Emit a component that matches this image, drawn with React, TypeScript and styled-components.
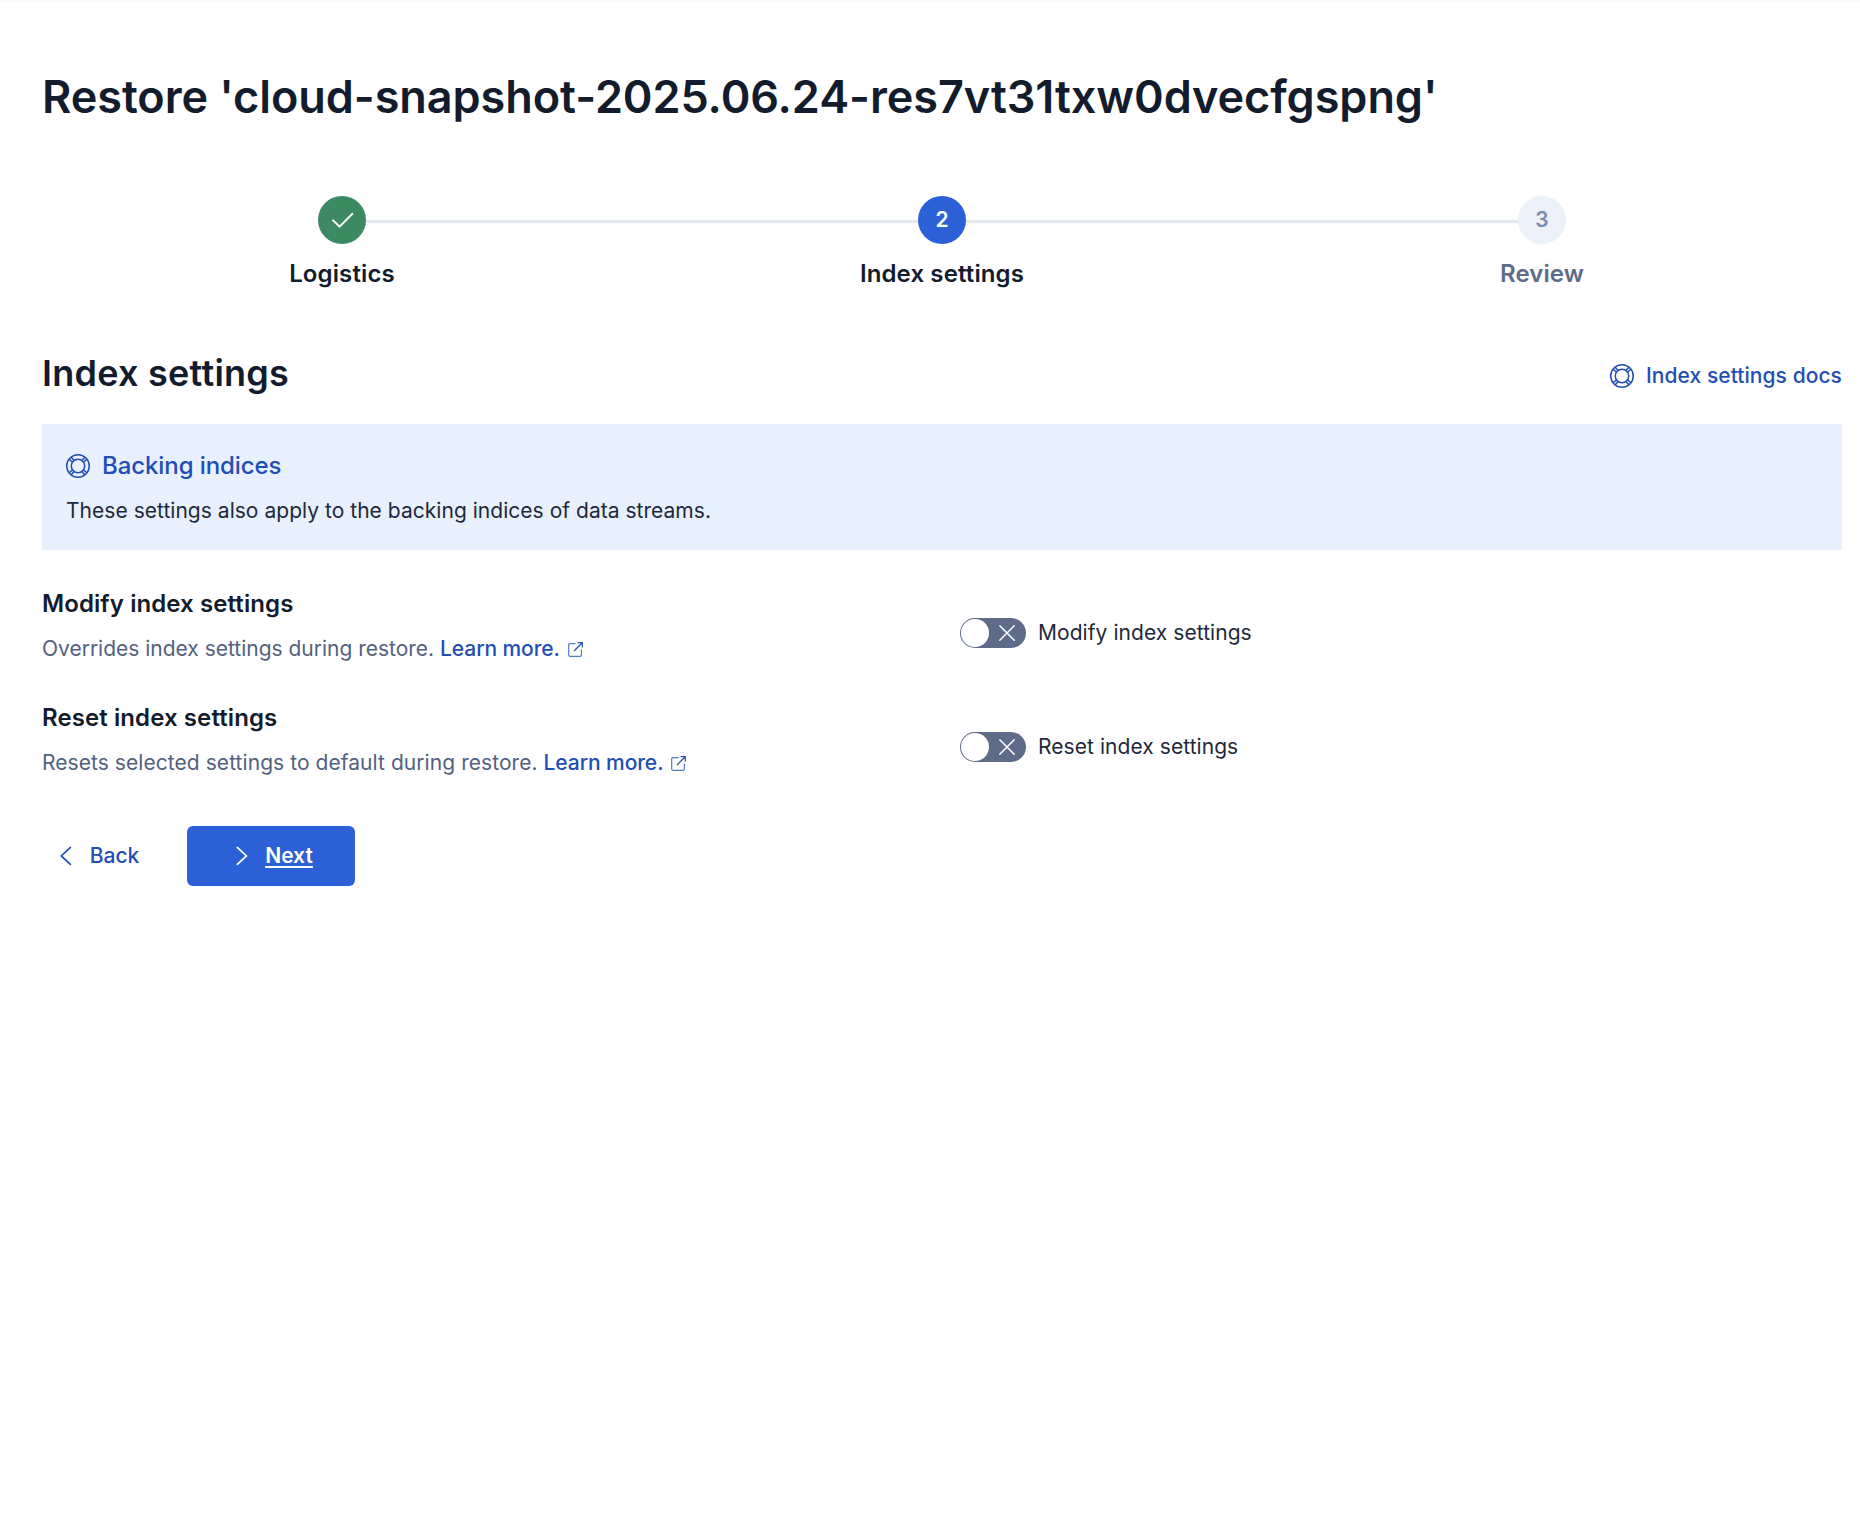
import React from 'react';
import styled, { createGlobalStyle } from 'styled-components';

const colors = {
  ink: '#131c2c',
  text: '#1e293c',
  subdued: '#536180',
  muted: '#5e6c89',
  link: '#214eb4',
  primary: '#2c60d6',
  success: '#3d8a62',
  line: '#e3e8f2',
  panel: '#e8f0fe',
};

const GlobalStyle = createGlobalStyle`
  * { box-sizing: border-box; }
  body {
    margin: 0;
    background: #fff;
    color: ${colors.ink};
    font-family: Inter, "Liberation Sans", sans-serif;
    font-size: 21px;
    line-height: 30px;
    -webkit-font-smoothing: antialiased;
  }
  h1, h2, h3, p { margin: 0; }
`;

const Page = styled.main`
  min-height: 1532px;
  padding: 67px 18px 0 42px;
  background: linear-gradient(#f8f8f9, #fff 4px);
`;

const PageTitle = styled.h1`
  font-size: 45px;
  line-height: 60px;
  font-weight: 600;
  letter-spacing: -0.06px;
  white-space: nowrap;
`;

const Steps = styled.ol`
  display: grid;
  grid-template-columns: repeat(3, 1fr);
  list-style: none;
  margin: 69px 0 0;
  padding: 0;
`;

const Step = styled.li<{ $disabled?: boolean }>`
  display: flex;
  flex-direction: column;
  align-items: center;
  color: ${(p) => (p.$disabled ? colors.muted : colors.ink)};
`;

const StepTrack = styled.div`
  display: flex;
  align-items: center;
  width: 100%;
`;

const Connector = styled.span<{ $hidden?: boolean }>`
  flex: 1;
  height: 3px;
  margin-top: 3px;
  background: ${(p) => (p.$hidden ? 'transparent' : colors.line)};
`;

const StepCircle = styled.span<{ $bg: string; $fg: string }>`
  display: flex;
  align-items: center;
  justify-content: center;
  width: 48px;
  height: 48px;
  border-radius: 50%;
  background: ${(p) => p.$bg};
  color: ${(p) => p.$fg};
  font-weight: 600;
`;

const StepLabel = styled.span`
  margin-top: 12px;
  font-size: 24px;
  line-height: 36px;
  font-weight: 600;
  letter-spacing: 0.12px;
`;

const SectionHeader = styled.header`
  display: flex;
  justify-content: space-between;
  align-items: center;
  margin-top: 57px;
  height: 48px;
`;

const SectionTitle = styled.h2`
  font-size: 36px;
  line-height: 48px;
  font-weight: 600;
  letter-spacing: 0.25px;
`;

const DocsLink = styled.a`
  display: flex;
  align-items: center;
  gap: 12px;
  margin-top: 6px;
  color: ${colors.link};
  font-weight: 500;
  letter-spacing: 0.06px;
`;

const Callout = styled.section`
  display: flex;
  flex-direction: column;
  gap: 12px;
  margin-top: 27px;
  padding: 24px;
  background: ${colors.panel};
  color: ${colors.text};
  letter-spacing: 0.03px;
`;

const CalloutTitle = styled.div`
  display: flex;
  align-items: center;
  gap: 12px;
  color: ${colors.link};
  font-size: 24px;
  line-height: 36px;
  font-weight: 500;
  letter-spacing: -0.08px;
`;

const Settings = styled.div`
  display: flex;
  flex-direction: column;
  gap: 36px;
  margin-top: 36px;
`;

const SettingRow = styled.div<{ $tracking: number }>`
  display: grid;
  grid-template-columns: 1fr 1fr;
  column-gap: 36px;
  letter-spacing: ${(p) => p.$tracking}px;
`;

const SettingTitle = styled.h3`
  font-size: 24px;
  line-height: 36px;
  font-weight: 600;
  letter-spacing: 0.09px;
`;

const SettingDescription = styled.p`
  margin-top: 12px;
  color: ${colors.subdued};
`;

const InlineLink = styled.a`
  color: ${colors.link};
  font-weight: 500;
  letter-spacing: -0.08px;

  svg {
    margin-left: 8px;
    vertical-align: -1px;
  }
`;

const SwitchField = styled.label`
  display: flex;
  align-items: center;
  align-self: start;
  gap: 12px;
  margin-top: 32px;
  color: ${colors.text};
  letter-spacing: 0.06px;
`;

const SwitchBody = styled.span`
  display: flex;
  align-items: center;
  justify-content: space-between;
  width: 66px;
  height: 30px;
  padding: 0 11px 0 1px;
  border-radius: 15px;
  background: ${colors.muted};
`;

const SwitchThumb = styled.span`
  width: 28px;
  height: 28px;
  border-radius: 50%;
  background: #fff;
`;

const Actions = styled.div`
  display: flex;
  align-items: center;
  gap: 36px;
  margin-top: 48px;
`;

const Button = styled.button<{ $primary?: boolean }>`
  display: flex;
  align-items: center;
  justify-content: center;
  gap: 12px;
  height: 60px;
  width: ${(p) => (p.$primary ? '168px' : '109px')};
  padding: 0;
  border: 0;
  border-radius: 6px;
  background: ${(p) => (p.$primary ? colors.primary : 'transparent')};
  color: ${(p) => (p.$primary ? '#fff' : colors.link)};
  font: inherit;
  font-weight: ${(p) => (p.$primary ? 600 : 500)};
  text-decoration: ${(p) => (p.$primary ? 'underline' : 'none')};
  text-decoration-thickness: 2px;
  text-underline-offset: 3px;
`;

const HelpIcon = () => (
  <svg width="24" height="24" viewBox="0 0 24 24" fill="none" stroke="currentColor" strokeWidth="1.5">
    <circle cx="12" cy="12" r="11.25" />
    <circle cx="12" cy="12" r="6.75" />
    <path d="M3.2 5.2l3.7 3.3M5.2 3.2l3.3 3.7M20.8 5.2l-3.7 3.3M18.8 3.2l-3.3 3.7M3.2 18.8l3.7-3.3M5.2 20.8l3.3-3.7M20.8 18.8l-3.7-3.3M18.8 20.8l-3.3-3.7" />
  </svg>
);

const CheckIcon = () => (
  <svg width="24" height="24" viewBox="0 0 24 24" fill="none" stroke="currentColor" strokeWidth="2" strokeLinecap="round" strokeLinejoin="miter">
    <path d="M3.1 12.4l6.5 6.3L22.3 5.9" />
  </svg>
);

const PopoutIcon = () => (
  <svg width="15" height="15" viewBox="0 0 15 15" fill="none" stroke="currentColor" strokeWidth="1.2">
    <path d="M7.5 1.6H1.9a1.2 1.2 0 0 0-1.2 1.2v10.3a1.2 1.2 0 0 0 1.2 1.2h10.3a1.2 1.2 0 0 0 1.2-1.2V7.5" strokeOpacity="0.75" />
    <path d="M9.6.7h4.7v4.7M14 1L6 9" />
  </svg>
);

const CrossIcon = () => (
  <svg width="16" height="16" viewBox="0 0 16 16" fill="none" stroke="#fff" strokeWidth="1.5" strokeLinecap="round">
    <path d="M.8.8l14.4 14.4M15.2.8L.8 15.2" />
  </svg>
);

const ChevronIcon = ({ right }: { right?: boolean }) => (
  <svg width="24" height="24" viewBox="0 0 24 24" fill="none" stroke="currentColor" strokeWidth="1.7" strokeLinecap="round" strokeLinejoin="miter">
    <path d={right ? 'M8.3 3.4l9.1 8.5-9.1 8.5' : 'M16.4 3.4L7.3 11.9l9.1 8.5'} />
  </svg>
);

type SettingProps = { title: string; description: string; tracking: number };

const Setting = ({ title, description, tracking }: SettingProps) => (
  <SettingRow $tracking={tracking}>
    <div>
      <SettingTitle>{title}</SettingTitle>
      <SettingDescription>
        {description}{' '}
        <InlineLink>
          Learn more.
          <PopoutIcon />
        </InlineLink>
      </SettingDescription>
    </div>
    <SwitchField>
      <SwitchBody>
        <SwitchThumb />
        <CrossIcon />
      </SwitchBody>
      {title}
    </SwitchField>
  </SettingRow>
);

export default function App() {
  return (
    <>
      <GlobalStyle />
      <Page>
        <PageTitle>Restore 'cloud-snapshot-2025.06.24-res7vt31txw0dvecfgspng'</PageTitle>
        <Steps>
          <Step>
            <StepTrack>
              <Connector $hidden />
              <StepCircle $bg={colors.success} $fg="#fff">
                <CheckIcon />
              </StepCircle>
              <Connector />
            </StepTrack>
            <StepLabel>Logistics</StepLabel>
          </Step>
          <Step>
            <StepTrack>
              <Connector />
              <StepCircle $bg={colors.primary} $fg="#fff">2</StepCircle>
              <Connector />
            </StepTrack>
            <StepLabel>Index settings</StepLabel>
          </Step>
          <Step $disabled>
            <StepTrack>
              <Connector />
              <StepCircle $bg="#ecf1f9" $fg="#7a8bb0">3</StepCircle>
              <Connector $hidden />
            </StepTrack>
            <StepLabel>Review</StepLabel>
          </Step>
        </Steps>
        <SectionHeader>
          <SectionTitle>Index settings</SectionTitle>
          <DocsLink>
            <HelpIcon />
            Index settings docs
          </DocsLink>
        </SectionHeader>
        <Callout>
          <CalloutTitle>
            <HelpIcon />
            Backing indices
          </CalloutTitle>
          <p>These settings also apply to the backing indices of data streams.</p>
        </Callout>
        <Settings>
          <Setting title="Modify index settings" description="Overrides index settings during restore." tracking={-0.01} />
          <Setting title="Reset index settings" description="Resets selected settings to default during restore." tracking={0.06} />
        </Settings>
        <Actions>
          <Button>
            <ChevronIcon />
            Back
          </Button>
          <Button $primary>
            <ChevronIcon right />
            Next
          </Button>
        </Actions>
      </Page>
    </>
  );
}
